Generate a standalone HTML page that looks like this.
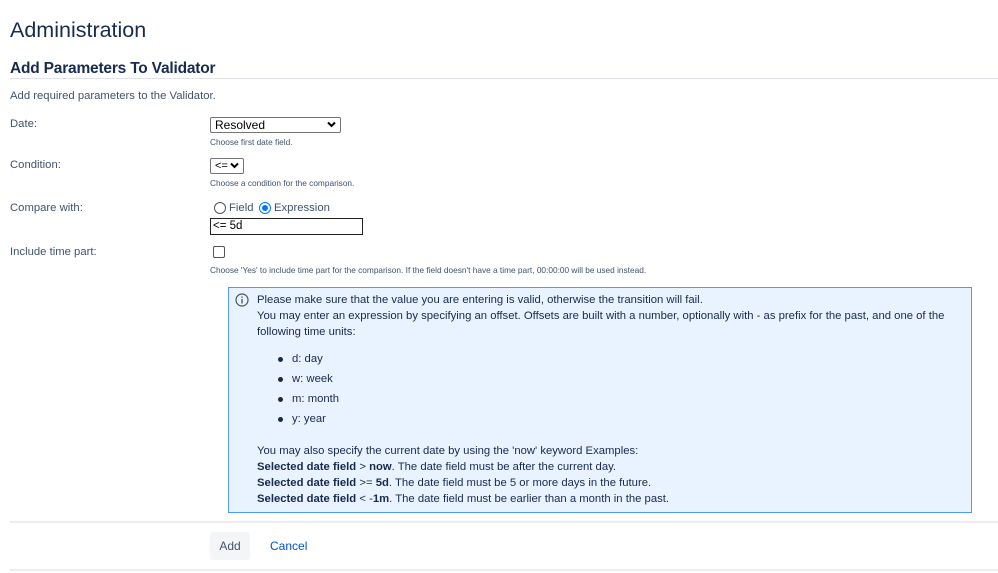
<!DOCTYPE html>
<html><head><meta charset="utf-8"><style>
*{margin:0;padding:0;box-sizing:border-box}
body{width:998px;height:573px;background:#fff;font-family:"Liberation Sans",sans-serif;color:#172b4d;position:relative;overflow:hidden}
.a{position:absolute;white-space:nowrap}
.lbl{font-size:11.3px;color:#42526e}
.hint{font-size:8.3px;color:#42526e}
.sel{position:absolute;border:1px solid #767676;border-radius:2px;background:#fff;font-size:12px;color:#000;padding-left:4px;line-height:14px}
.chev{position:absolute;right:4px;top:3px}
.box{position:absolute;left:228px;top:287px;width:744px;height:226px;background:#e9f2ff;border:1px solid #4c9aff}
.t{position:absolute;left:28px;font-size:11.3px;color:#172b4d;white-space:nowrap}
.dot{position:absolute;left:49px;width:5px;height:5px;border-radius:50%;background:#172b4d}
b{font-weight:bold}
</style></head><body>
<div class="a" style="left:10px;top:18px;font-size:21.5px;color:#172b4d">Administration</div>
<div class="a" style="left:10px;top:60px;font-size:15.5px;font-weight:bold;color:#172b4d;letter-spacing:-0.2px">Add Parameters To Validator</div>
<div class="a" style="left:10px;top:78px;width:988px;height:1px;background:#dfe1e6"></div>
<div class="a lbl" style="left:10px;top:90px">Add required parameters to the Validator.</div>

<div class="a lbl" style="left:10px;top:118px">Date:</div>
<div class="sel" style="left:210px;top:117px;width:131px;height:16px">Resolved<svg class="chev" width="9" height="7" viewBox="0 0 9 7"><path d="M1 1.5L4.5 5L8 1.5" stroke="#000" stroke-width="2" fill="none"/></svg></div>
<div class="a hint" style="left:210px;top:137px">Choose first date field.</div>

<div class="a lbl" style="left:10px;top:159px">Condition:</div>
<div class="sel" style="left:210px;top:158px;width:34px;height:16px;font-size:11px">&lt;=<svg class="chev" width="9" height="7" viewBox="0 0 9 7"><path d="M1 1.5L4.5 5L8 1.5" stroke="#000" stroke-width="2" fill="none"/></svg></div>
<div class="a hint" style="left:210px;top:178px">Choose a condition for the comparison.</div>

<div class="a lbl" style="left:10px;top:202px">Compare with:</div>
<div class="a" style="left:214px;top:202px;width:12px;height:12px;border:1px solid #555;border-radius:50%"></div>
<div class="a lbl" style="left:229px;top:202px;color:#42526e">Field</div>
<div class="a" style="left:259px;top:202px;width:12px;height:12px;border:1px solid #0075ff;border-radius:50%"><div style="margin:2px;width:6px;height:6px;border-radius:50%;background:#0075ff"></div></div>
<div class="a lbl" style="left:274px;top:202px">Expression</div>
<div class="a" style="left:210px;top:218px;width:153px;height:17px;border:1px solid #222;font-size:11.5px;color:#000;padding-left:2px;line-height:14px">&lt;= 5d</div>

<div class="a lbl" style="left:10px;top:246px">Include time part:</div>
<div class="a" style="left:213px;top:246px;width:12px;height:12px;border:1px solid #555;border-radius:2px"></div>
<div class="a hint" style="left:210px;top:265px">Choose 'Yes' to include time part for the comparison. If the field doesn't have a time part, 00:00:00 will be used instead.</div>

<div class="box">
<svg style="position:absolute;left:6px;top:5px" width="14" height="14" viewBox="0 0 14 14"><circle cx="7" cy="7" r="6" fill="none" stroke="#42526e" stroke-width="1.2"/><rect x="6.4" y="6" width="1.3" height="4.5" fill="#42526e"/><rect x="6.4" y="3.5" width="1.3" height="1.3" fill="#42526e"/></svg>
<div class="t" style="top:6px">Please make sure that the value you are entering is valid, otherwise the transition will fail.</div>
<div class="t" style="top:22px">You may enter an expression by specifying an offset. Offsets are built with a number, optionally with - as prefix for the past, and one of the</div>
<div class="t" style="top:38px">following time units:</div>
<div class="dot" style="top:69px"></div><div class="t" style="left:63px;top:65px">d: day</div>
<div class="dot" style="top:89px"></div><div class="t" style="left:63px;top:85px">w: week</div>
<div class="dot" style="top:109px"></div><div class="t" style="left:63px;top:105px">m: month</div>
<div class="dot" style="top:129px"></div><div class="t" style="left:63px;top:125px">y: year</div>
<div class="t" style="top:157px">You may also specify the current date by using the 'now' keyword Examples:</div>
<div class="t" style="top:173px"><b>Selected date field</b> &gt; <b>now</b>. The date field must be after the current day.</div>
<div class="t" style="top:189px"><b>Selected date field</b> &gt;= <b>5d</b>. The date field must be 5 or more days in the future.</div>
<div class="t" style="top:205px"><b>Selected date field</b> &lt; -<b>1m</b>. The date field must be earlier than a month in the past.</div>
</div>

<div class="a" style="left:10px;top:521px;width:988px;height:2px;background:#ebecf0"></div>
<div class="a" style="left:210px;top:532px;width:40px;height:28px;background:#f4f5f7;border-radius:3px;font-size:12px;color:#42526e;text-align:center;line-height:28px">Add</div>
<div class="a" style="left:270px;top:539px;font-size:12px;color:#0052cc">Cancel</div>
<div class="a" style="left:10px;top:569px;width:988px;height:2px;background:#ebecf0"></div>
</body></html>
